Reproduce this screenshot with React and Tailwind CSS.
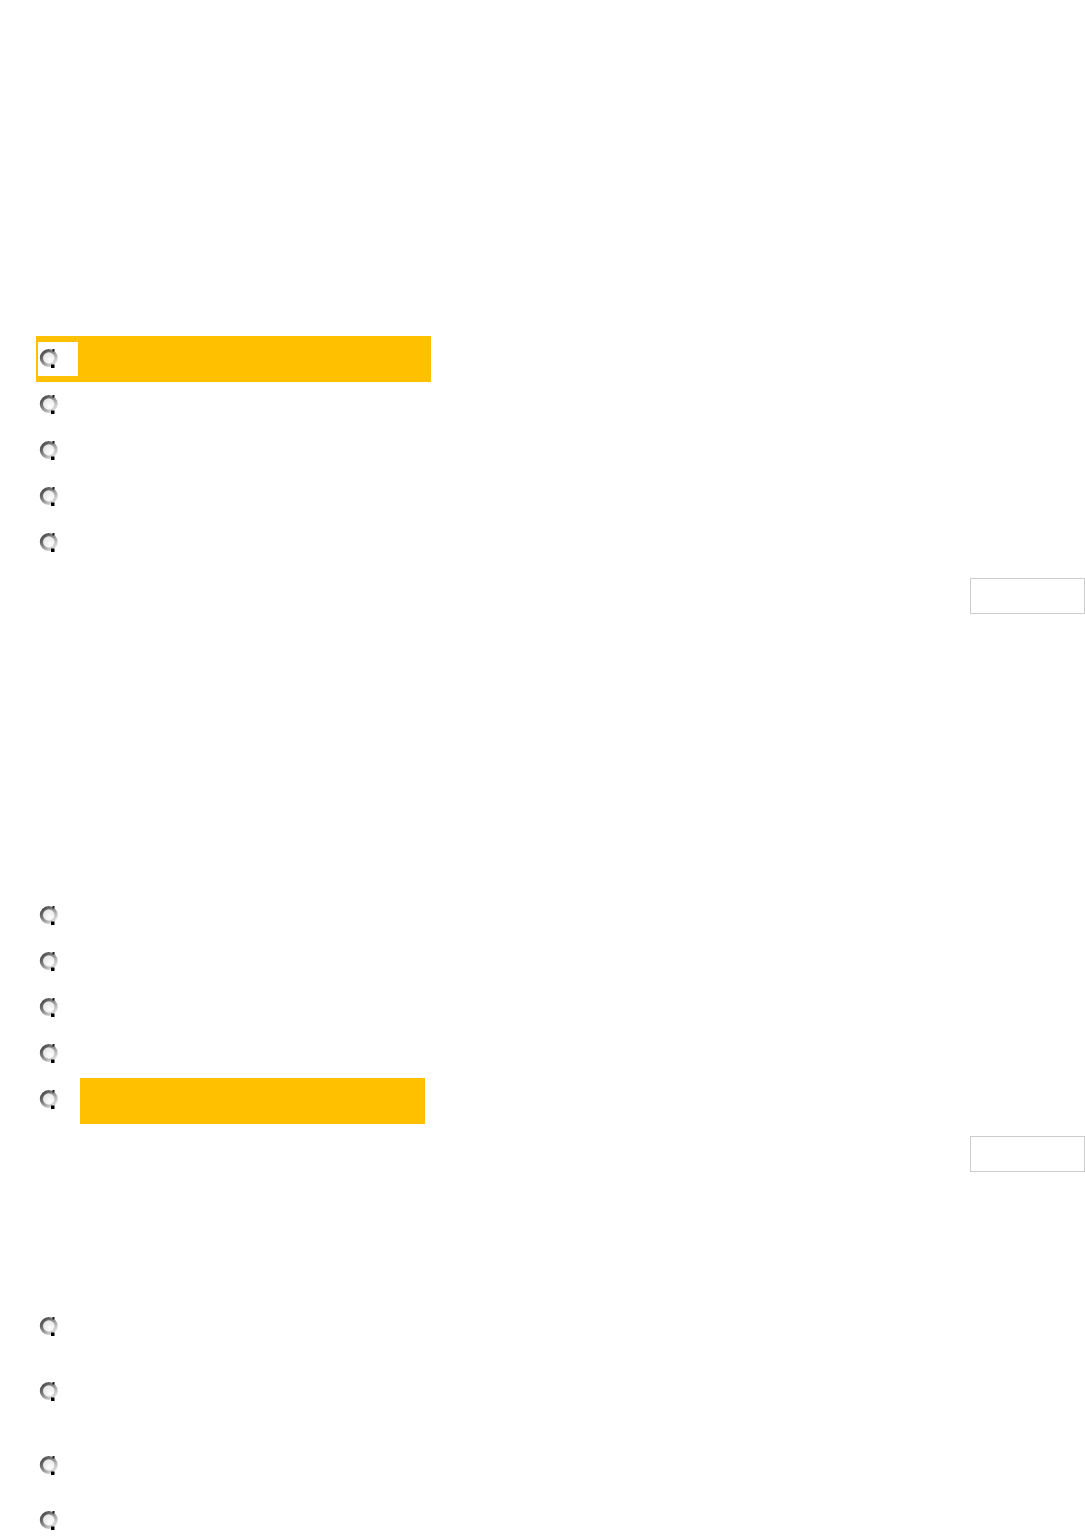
import React, { useId } from "react";

function Radio() {
  const id = useId().replace(/:/g, "");
  return (
    <svg width="20" height="20" viewBox="0 0 20 20" className="block shrink-0 -mt-[2px]">
      <defs>
        <linearGradient id={`r${id}`} x1="0" y1="0" x2="1" y2="1">
          <stop offset="0" stopColor="#3c3c3c" />
          <stop offset="0.45" stopColor="#8a8a8a" />
          <stop offset="1" stopColor="#f4f4f4" />
        </linearGradient>
        <radialGradient id={`f${id}`} cx="0.6" cy="0.65" r="0.6">
          <stop offset="0" stopColor="#ffffff" />
          <stop offset="1" stopColor="#e2e2e2" />
        </radialGradient>
      </defs>
      <circle cx="9.8" cy="10" r="7.4" fill={`url(#f${id})`} stroke={`url(#r${id})`} strokeWidth="3.2" />
      <rect x="13.5" y="1" width="2" height="2.5" fill="#1a1a1a" />
      <rect x="12" y="16.5" width="3.5" height="3.5" fill="#000" />
    </svg>
  );
}

function Row({ h = 46, highlight = false, labelHighlight = false }) {
  return (
    <div
      className={`flex items-center w-[395px] ${highlight ? "bg-[#ffc000]" : ""}`}
      style={{ height: h }}
    >
      <div className={`w-[40px] h-[34px] ml-[2px] flex items-center pl-[1px] ${highlight ? "bg-white" : ""}`}>
        <Radio />
      </div>
      {labelHighlight ? (
        <div className="ml-[2px] w-[345px] h-[46px] mt-[2px] bg-[#ffc000]" />
      ) : (
        <div className="flex-1" />
      )}
    </div>
  );
}

function Button() {
  return (
    <div className="flex justify-end">
      <button className="w-[115px] h-[36px] border border-[#cccccc] bg-white" />
    </div>
  );
}

export default function App() {
  return (
    <div className="w-[1085px] min-h-[1539px] bg-white font-['Liberation_Sans',Arial,sans-serif]">
      <div className="h-[336px]" />
      <div className="pl-[36px] flex flex-col">
        <Row highlight />
        <Row />
        <Row />
        <Row />
        <Row />
      </div>
      <div className="h-[12px]" />
      <Button />
      <div className="h-[279px]" />
      <div className="pl-[36px] flex flex-col">
        <Row />
        <Row />
        <Row />
        <Row />
        <Row labelHighlight />
      </div>
      <div className="h-[13px]" />
      <Button />
      <div className="h-[132px]" />
      <div className="pl-[36px] flex flex-col">
        <Row h={46} />
        <Row h={84} />
        <Row h={64} />
        <Row h={46} />
      </div>
    </div>
  );
}
